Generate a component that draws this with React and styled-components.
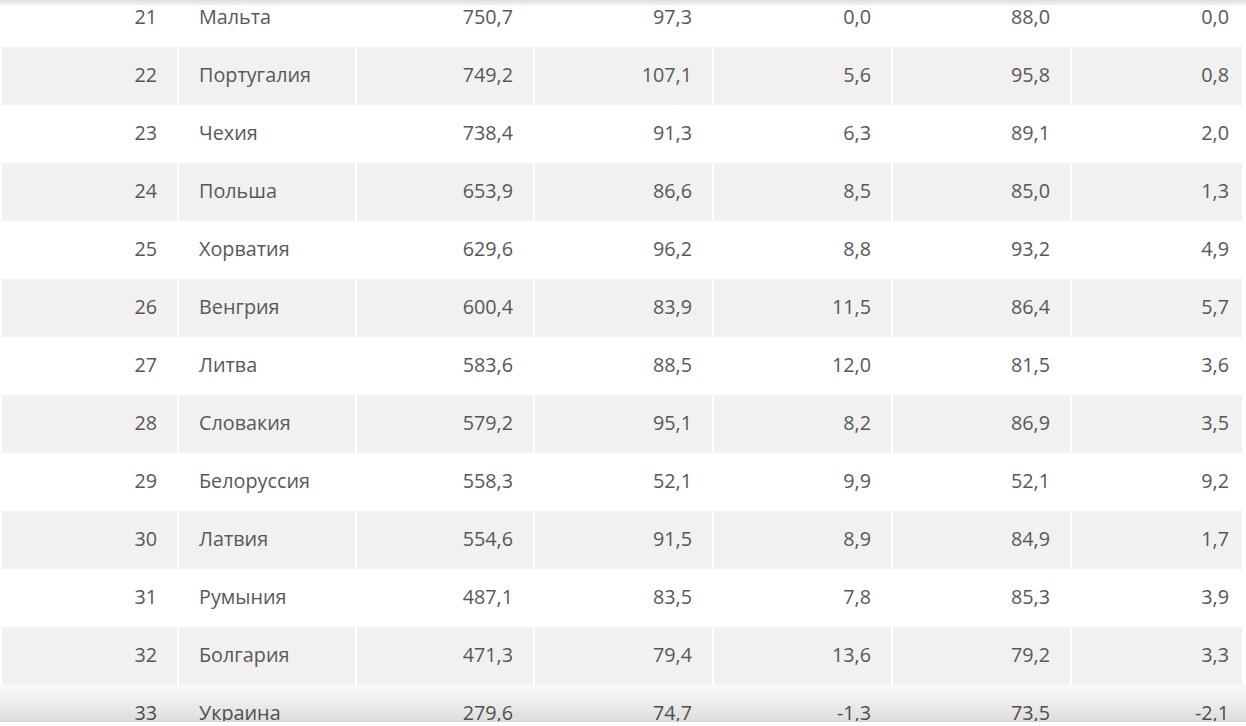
import React from "react";
import styled, { createGlobalStyle } from "styled-components";

const GlobalStyle = createGlobalStyle`
    html, body {
        margin: 0;
        padding: 0;
        background: #fff;
    }
    body {
        font-family: "Open Sans", "Liberation Sans", sans-serif;
    }
`;

const rows = [
    [21, "Мальта", "750,7", "97,3", "0,0", "88,0", "0,0"],
    [22, "Португалия", "749,2", "107,1", "5,6", "95,8", "0,8"],
    [23, "Чехия", "738,4", "91,3", "6,3", "89,1", "2,0"],
    [24, "Польша", "653,9", "86,6", "8,5", "85,0", "1,3"],
    [25, "Хорватия", "629,6", "96,2", "8,8", "93,2", "4,9"],
    [26, "Венгрия", "600,4", "83,9", "11,5", "86,4", "5,7"],
    [27, "Литва", "583,6", "88,5", "12,0", "81,5", "3,6"],
    [28, "Словакия", "579,2", "95,1", "8,2", "86,9", "3,5"],
    [29, "Белоруссия", "558,3", "52,1", "9,9", "52,1", "9,2"],
    [30, "Латвия", "554,6", "91,5", "8,9", "84,9", "1,7"],
    [31, "Румыния", "487,1", "83,5", "7,8", "85,3", "3,9"],
    [32, "Болгария", "471,3", "79,4", "13,6", "79,2", "3,3"],
    [33, "Украина", "279,6", "74,7", "-1,3", "73,5", "-2,1"],
];

const widths = [175, 176, 176, 177, 177, 177, 170];

const Viewport = styled.div`
    position: relative;
    height: 721px;
    overflow: hidden;
    border-bottom: 1px solid #d6d6d6;

    &::before {
        content: "";
        position: absolute;
        left: 0;
        right: 0;
        top: 0;
        height: 7px;
        background: linear-gradient(to bottom, rgba(0,0,0,.13), rgba(0,0,0,0));
        pointer-events: none;
    }

    &::after {
        content: "";
        position: absolute;
        left: 0;
        right: 0;
        bottom: 0;
        height: 36px;
        background: linear-gradient(to bottom, rgba(0,0,0,.02), rgba(0,0,0,.13));
        pointer-events: none;
    }
`;

const Table = styled.table`
    margin-top: -11px;
    table-layout: fixed;
    border-collapse: separate;
    border-spacing: 2px 0;
    width: 1244px;
    color: #585858;
    font-size: 19.8px;
`;

const Row = styled.tr`
    height: 58px;

    &:nth-child(even) td {
        background: #f1f1f1;
    }
`;

const Cell = styled.td`
    padding: 0 ${({ $last }) => ($last ? "13px" : "20px")} 4px 20px;
    text-align: ${({ $left }) => ($left ? "left" : "right")};
    vertical-align: middle;
    white-space: nowrap;
`;

export default function App() {
    return (
        <>
            <GlobalStyle />
            <Viewport>
                <Table>
                    <colgroup>
                        {widths.map((w, i) => (
                            <col key={i} style={{ width: w }} />
                        ))}
                    </colgroup>
                    <tbody>
                        {rows.map((r) => (
                            <Row key={r[0]}>
                                {r.map((v, i) => (
                                    <Cell key={i} $left={i === 1} $last={i === 6}>
                                        {v}
                                    </Cell>
                                ))}
                            </Row>
                        ))}
                    </tbody>
                </Table>
            </Viewport>
        </>
    );
}
